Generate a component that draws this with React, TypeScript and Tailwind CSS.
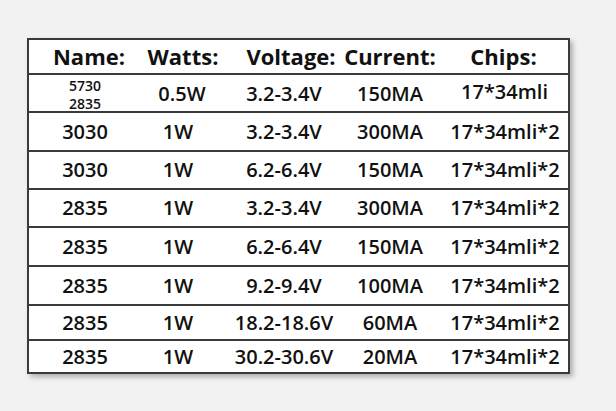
const rows = [
  { name: '3030', watts: '1W', volt: '3.2-3.4V', cur: '300MA', chips: '17*34mli*2', h: 'h-[39px]' },
  { name: '3030', watts: '1W', volt: '6.2-6.4V', cur: '150MA', chips: '17*34mli*2', h: 'h-[38px]' },
  { name: '2835', watts: '1W', volt: '3.2-3.4V', cur: '300MA', chips: '17*34mli*2', h: 'h-[38px]' },
  { name: '2835', watts: '1W', volt: '6.2-6.4V', cur: '150MA', chips: '17*34mli*2', h: 'h-[39px]' },
  { name: '2835', watts: '1W', volt: '9.2-9.4V', cur: '100MA', chips: '17*34mli*2', h: 'h-[39px]' },
  { name: '2835', watts: '1W', volt: '18.2-18.6V', cur: '60MA', chips: '17*34mli*2', h: 'h-[35px]' },
  { name: '2835', watts: '1W', volt: '30.2-30.6V', cur: '20MA', chips: '17*34mli*2', h: 'h-[31px]' },
];

const grid = 'grid grid-cols-[112px_74px_138px_74px_141px] items-center';
const cell = 'flex justify-center whitespace-nowrap';

export default function App() {
  return (
    <div
      className="min-h-[411px] w-[616px] bg-[#f2f2f2] pl-[27px] pt-[38px] text-[#111]"
      style={{ fontFamily: '"Open Sans", "Noto Sans", sans-serif' }}
    >
      <div className="w-[543px] border-2 border-[#3a3a3a] bg-white shadow-[3px_3px_5px_rgba(0,0,0,0.28)]">
        {/* header */}
        <div className={`${grid} h-[35px] border-b-2 border-[#3a3a3a] text-[22px] font-bold`}>
          <div className={`${cell} pl-[8px]`}>Name:</div>
          <div className={`${cell} pl-[10px]`}>Watts:</div>
          <div className={`${cell} pl-[14px]`}>Voltage:</div>
          <div className={cell}>Current:</div>
          <div className={`${cell} pl-[12px]`}>Chips:</div>
        </div>

        {/* first row with two names */}
        <div className={`${grid} h-[38px] border-b-2 border-[#3a3a3a] text-[20px] font-semibold`}>
          <div className="flex flex-col items-center pt-[2px] text-[14px] leading-[18px]">
            <span>5730</span>
            <span>2835</span>
          </div>
          <div className={`${cell} pl-[8px]`}>0.5W</div>
          <div className={cell}>3.2-3.4V</div>
          <div className={cell}>150MA</div>
          <div className={`${cell} pl-[14px] pb-[4px]`}>17*34mli</div>
        </div>

        {rows.map((r, i) => (
          <div
            key={i}
            className={`${grid} ${r.h} ${i < rows.length - 1 ? 'border-b-2 border-[#3a3a3a]' : ''} text-[20px] font-semibold`}
          >
            <div className={cell}>{r.name}</div>
            <div className={cell}>{r.watts}</div>
            <div className={cell}>{r.volt}</div>
            <div className={cell}>{r.cur}</div>
            <div className={`${cell} pl-[15px]`}>{r.chips}</div>
          </div>
        ))}
      </div>
    </div>
  );
}
